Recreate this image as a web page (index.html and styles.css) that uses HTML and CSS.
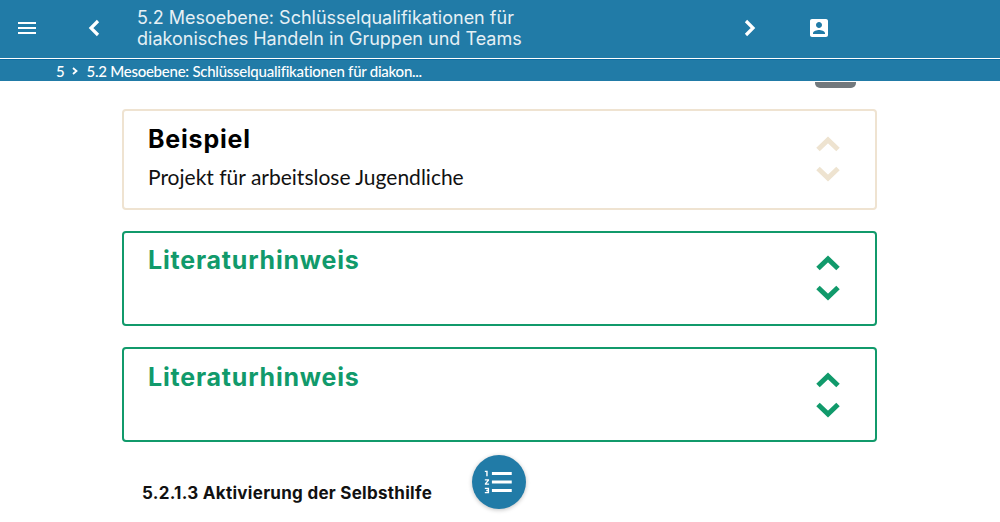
FILE: index.html
```html
<!DOCTYPE html>
<html lang="de">
<head>
    <meta charset="utf-8">
    <meta name="viewport" content="width=device-width, initial-scale=1">
    <title>5.2 Mesoebene</title>
    <link rel="stylesheet" href="styles.css">
</head>
<body>
<header class="topbar">
    <button class="icon-btn menu-btn" aria-label="Menü">
        <svg width="24" height="24" viewBox="0 0 24 24"><path d="M3 18h18v-2H3v2zm0-5h18v-2H3v2zm0-7v2h18V6H3z" fill="#fff"/></svg>
    </button>
    <button class="icon-btn back-btn" aria-label="Zurück">
        <svg width="16" height="20" viewBox="0 0 16 20"><path d="M12 3 L5 10 L12 17" fill="none" stroke="#fff" stroke-width="3.2"/></svg>
    </button>
    <div class="page-title">5.2 Mesoebene: Schlüsselqualifikationen für diakonisches Handeln in Gruppen und Teams</div>
    <button class="icon-btn next-btn" aria-label="Weiter">
        <svg width="16" height="20" viewBox="0 0 16 20"><path d="M4 3 L11 10 L4 17" fill="none" stroke="#fff" stroke-width="3.2"/></svg>
    </button>
    <button class="icon-btn profile-btn" aria-label="Profil">
        <svg width="24" height="24" viewBox="0 0 24 24"><path d="M3 5v14c0 1.100.89 2 2 2h14c1.100 0 2-.9 2-2V5c0-1.100-.9-2-2-2H5c-1.110 0-2 .9-2 2zm12 4c0 1.660-1.340 3-3 3s-3-1.340-3-3 1.340-3 3-3 3 1.340 3 3zm-9 8c0-2 4-3.100 6-3.100s6 1.100 6 3.100v1H6v-1z" fill="#fff"/></svg>
    </button>
</header>
<nav class="crumbs">
    <span>5</span>
    <svg class="crumb-sep" width="8" height="8" viewBox="0 0 8 8"><path d="M2 1 L5.500 4 L2 7" fill="none" stroke="#fff" stroke-width="1.800"/></svg>
    <span>5.2 Mesoebene: Schlüsselqualifikationen für diakon...</span>
</nav>
<div class="handle"></div>
<main class="content">
    <section class="card card-example">
        <div class="card-text">
            <h2 class="card-title">Beispiel</h2>
            <p class="card-sub">Projekt für arbeitslose Jugendliche</p>
        </div>
        <div class="arrows">
            <svg width="26" height="20" viewBox="0 0 26 20"><path d="M3 15.500 L13 6 L23 15.500" fill="none" stroke="currentColor" stroke-width="5"/></svg>
            <svg width="26" height="20" viewBox="0 0 26 20"><path d="M3 4.500 L13 14 L23 4.500" fill="none" stroke="currentColor" stroke-width="5"/></svg>
        </div>
    </section>
    <section class="card card-lit">
        <div class="card-text">
            <h2 class="card-title">Literaturhinweis</h2>
        </div>
        <div class="arrows">
            <svg width="26" height="20" viewBox="0 0 26 20"><path d="M3 15.500 L13 6 L23 15.500" fill="none" stroke="currentColor" stroke-width="5"/></svg>
            <svg width="26" height="20" viewBox="0 0 26 20"><path d="M3 4.500 L13 14 L23 4.500" fill="none" stroke="currentColor" stroke-width="5"/></svg>
        </div>
    </section>
    <section class="card card-lit">
        <div class="card-text">
            <h2 class="card-title">Literaturhinweis</h2>
        </div>
        <div class="arrows">
            <svg width="26" height="20" viewBox="0 0 26 20"><path d="M3 15.500 L13 6 L23 15.500" fill="none" stroke="currentColor" stroke-width="5"/></svg>
            <svg width="26" height="20" viewBox="0 0 26 20"><path d="M3 4.500 L13 14 L23 4.500" fill="none" stroke="currentColor" stroke-width="5"/></svg>
        </div>
    </section>
    <h3 class="section-head">5.2.1.3 Aktivierung der Selbsthilfe</h3>
</main>
<button class="fab" aria-label="Inhaltsverzeichnis">
    <svg width="34" height="34" viewBox="0 0 24 24"><path d="M2 17h2v.5H3v1h1v.5H2v1h3v-4H2v1zm1-9h1V4H2v1h1v3zm-1 3h1.800L2 13.100v.9h3v-1H3.200L5 10.900V10H2v1zm5-6v2h14V5H7zm0 14h14v-2H7v2zm0-6h14v-2H7v2z" fill="#fff"/></svg>
</button>
</body>
</html>
```

FILE: styles.css
```css
html {
    height: 100%;
}

body {
    margin: 0;
    height: 100%;
    overflow: hidden;
    position: relative;
    background: white;
    font-family: "Lato", sans-serif;
}

button {
    background: none;
    border: none;
    padding: 0;
}

.topbar {
    box-sizing: border-box;
    height: 58px;
    padding-bottom: 2px;
    background: #217ba7;
    display: flex;
    align-items: center;
}

.icon-btn {
    display: flex;
    align-items: center;
    justify-content: center;
}

.menu-btn {
    width: 24px;
    margin-left: 15px;
}

.back-btn {
    width: 16px;
    margin-left: 47px;
}

.page-title {
    width: 400px;
    margin-left: 35px;
    font: 400 18px/21px "Inter", sans-serif;
    color: #e6f0f5;
}

.next-btn {
    width: 16px;
    margin-left: 205px;
}

.profile-btn {
    width: 24px;
    margin-left: 49px;
}

.crumbs {
    box-sizing: border-box;
    height: 23px;
    padding: 2px 0 0 56px;
    background: #217ba7;
    border-top: 1px solid #fff;
    box-shadow: inset 0 1px 0 #0b6aa0;
    display: flex;
    align-items: center;
    gap: 7px;
    font-size: 15px;
    font-weight: 500;
    color: white;
    letter-spacing: -0.25px;
}

.handle {
    position: absolute;
    top: 82px;
    left: 815px;
    width: 41px;
    height: 6px;
    background: #72797d;
    border-radius: 0 0 5px 5px;
}

.content {
    width: 755px;
    margin: 28px 0 0 122px;
    display: flex;
    flex-direction: column;
    gap: 21.5px;
}

.card {
    box-sizing: border-box;
    border-radius: 4px;
    border: 2px solid;
    padding: 12.25px 34px 0 24px;
    display: flex;
    justify-content: space-between;
}

.card-example {
    height: 100.5px;
    padding-top: 13px;
    border-color: #efe3d1;
}

.card-lit {
    height: 94.75px;
    border-color: #119a6b;
}

.card-title {
    margin: 0;
    font: 700 25px/30px "Inter", sans-serif;
    letter-spacing: 0.8px;
}

.card-example .card-title {
    color: black;
}

.card-lit .card-title {
    color: #119a6b;
}

.card-sub {
    margin: 10px 0 0 0;
    font-size: 21px;
    line-height: 26px;
    color: #111;
}

.arrows {
    display: flex;
    flex-direction: column;
    gap: 10px;
    width: 26px;
    margin-top: 8px;
}

.card-example .arrows {
    margin-top: 10px;
    color: #eee3d0;
}

.card-lit .arrows {
    color: #119a6b;
}

.section-head {
    margin: 19px 0 0 20px;
    font: 700 17px/20px "Inter", sans-serif;
    letter-spacing: 0.28px;
    color: #111;
}

.fab {
    position: absolute;
    left: 472px;
    top: 455px;
    width: 54px;
    height: 54px;
    border-radius: 50%;
    background: #217ba7;
    box-shadow: 0 1px 4px rgba(0, 0, 0, .25);
    display: flex;
    align-items: center;
    justify-content: center;
}
```
